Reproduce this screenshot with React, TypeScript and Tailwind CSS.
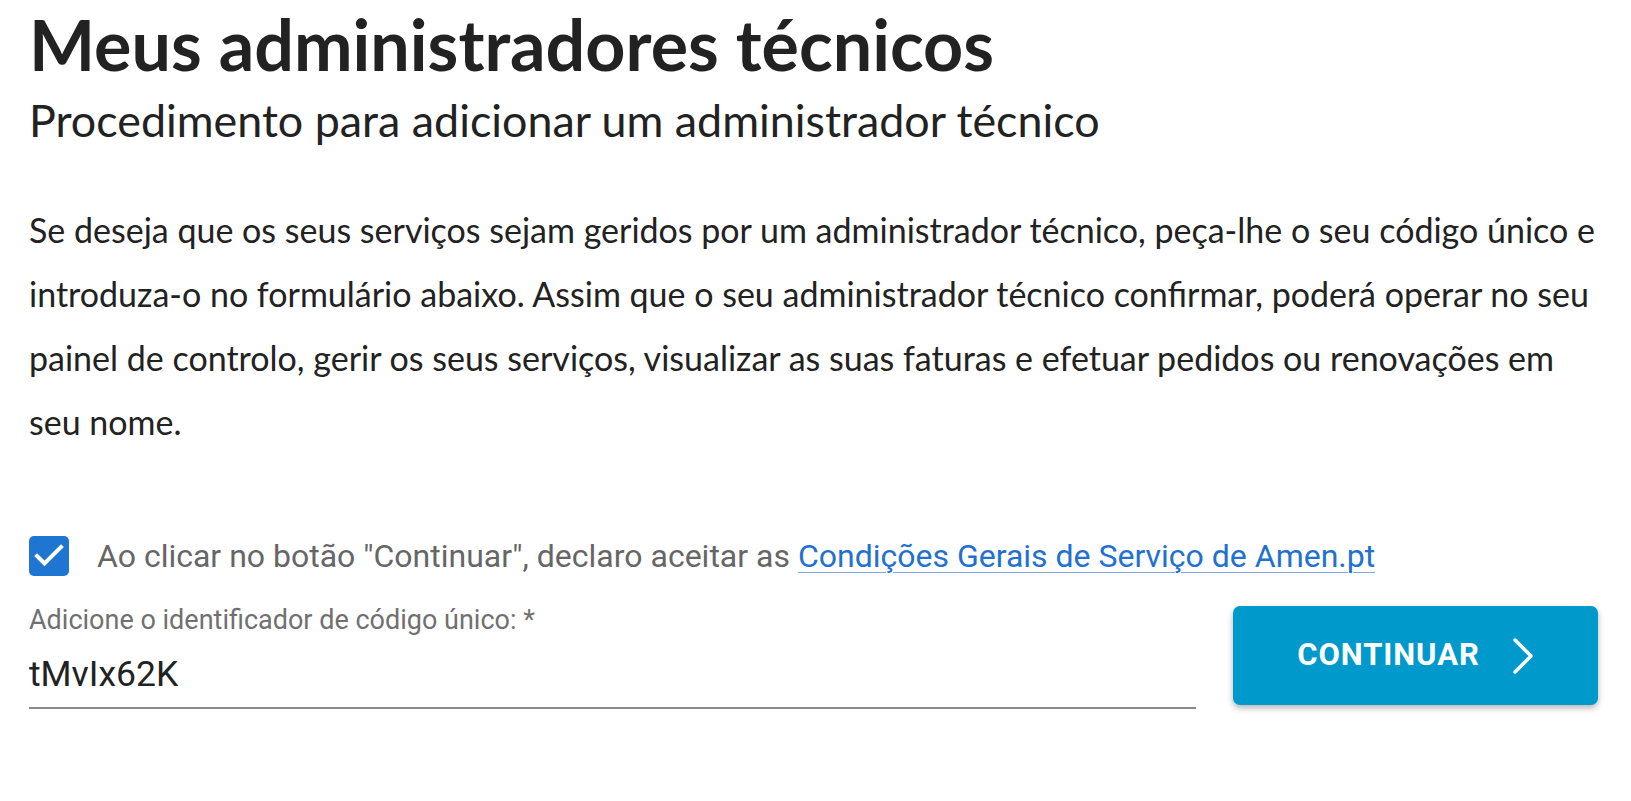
export default function App() {
  return (
    <div className="min-h-screen bg-white pl-[29px] pr-[33px] pt-[4px] font-['Lato',sans-serif] text-[#222]">
      <h1 className="text-[70px] font-bold leading-[80px]">Meus administradores técnicos</h1>
      <h2 className="mt-[8px] text-[44.8px] leading-[56px]">Procedimento para adicionar um administrador técnico</h2>

      <p className="mt-[50px] text-[34px] leading-[64px]">
        Se deseja que os seus serviços sejam geridos por um administrador técnico, peça-lhe o seu código único e
        <br />
        introduza-o no formulário abaixo. Assim que o seu administrador técnico confirmar, poderá operar no seu
        <br />
        painel de controlo, gerir os seus serviços, visualizar as suas faturas e efetuar pedidos ou renovações em
        <br />
        seu nome.
      </p>

      <div className="mt-[82px] flex items-center gap-[28px] font-['Roboto',sans-serif]">
        <span className="flex h-[40px] w-[40px] shrink-0 items-center justify-center rounded-[5px] bg-[#1f76d2]">
          <svg width="40" height="40" viewBox="0 0 40 40" fill="none">
            <polyline points="8,20 15.5,27.5 32,11" stroke="#fff" strokeWidth="4" strokeLinecap="square" />
          </svg>
        </span>
        <p className="text-[32px] leading-[40px] text-[#666]">
          Ao clicar no botão "Continuar", declaro aceitar as{" "}
          <a href="#" className="text-[#2271d1] underline decoration-1 decoration-[#7fa9dd] underline-offset-[5px]">
            Condições Gerais de Serviço de Amen.pt
          </a>
        </p>
      </div>

      <div className="mt-[30px] flex items-start gap-[37px] font-['Roboto',sans-serif]">
        <label className="flex flex-1 flex-col">
          <span className="text-[27px] leading-[28px] text-[#707070]">Adicione o identificador de código único: *</span>
          <input
            defaultValue="tMvIx62K"
            className="mt-[17px] h-[58px] border-b-2 border-[#8a8a8a] pb-[10px] text-[35.5px] text-[#222] outline-none"
          />
        </label>
        <button className="flex h-[99px] w-[365px] shrink-0 items-center justify-center gap-[32px] rounded-[7px] bg-[#0099cc] text-[31px] font-bold tracking-[0.03em] text-white shadow-[0_3px_6px_rgba(0,0,0,0.3)]">
          CONTINUAR
          <svg width="22" height="36" viewBox="0 0 22 36" fill="none">
            <polyline points="3,2 19,18 3,34" stroke="#fff" strokeWidth="3.5" strokeLinecap="round" strokeLinejoin="round" />
          </svg>
        </button>
      </div>
    </div>
  )
}
